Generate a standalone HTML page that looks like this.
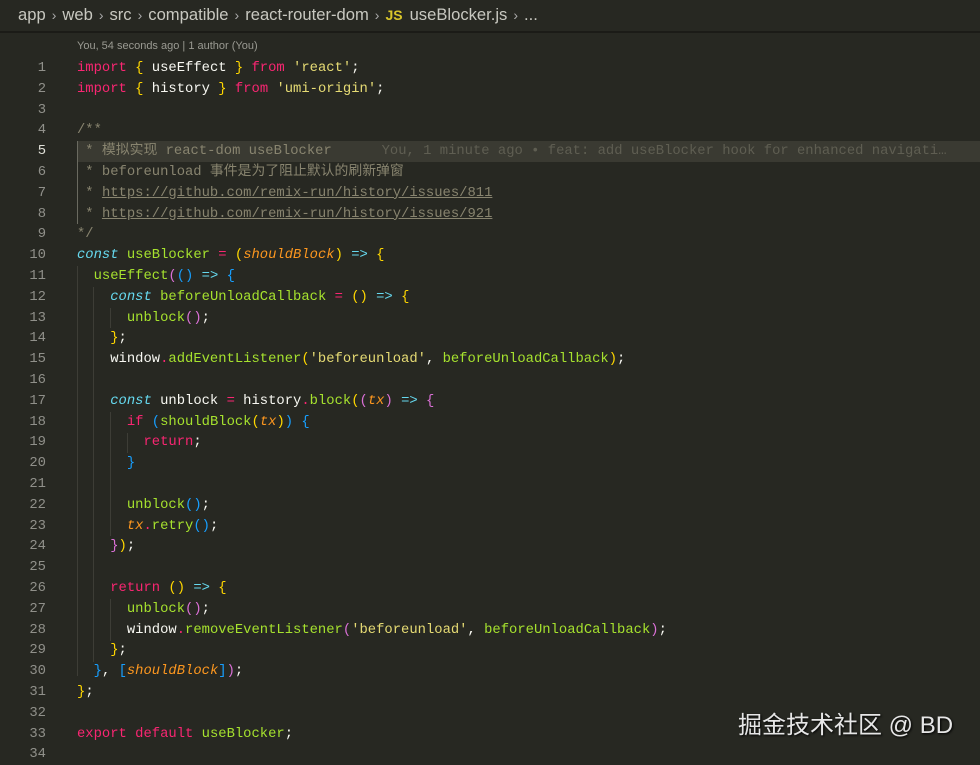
<!DOCTYPE html>
<html><head><meta charset="utf-8"><style>
body{margin:0;width:980px;height:758px;background:#272822;overflow:hidden;position:relative;font-family:"Liberation Mono","Noto Sans CJK SC",monospace;}
.bc{position:absolute;left:0;top:0;width:980px;height:33px;background:#272822;border-bottom:2px solid #1b1b17;font-family:"Liberation Sans",sans-serif;font-size:16.6px;color:#c8c8c0;line-height:30px;padding-left:18px;box-sizing:border-box;white-space:nowrap}
.bc .sep{color:#aaa;margin:0 6px;font-size:14px}
.bc .js{color:#d8c52a;font-weight:bold;font-size:14px;margin-right:7px}
.lens{position:absolute;left:77px;top:40px;font-family:"Liberation Sans",sans-serif;font-size:11px;color:#9a9a92}
.ln{position:absolute;left:0;width:46px;text-align:right;font-size:13.85px;color:#90908a;height:20.8px;line-height:20.8px}
.l{position:absolute;left:77px;font-size:13.85px;height:20.8px;line-height:20.8px;white-space:pre;color:#f8f8f2}
.k{color:#f92672}.s{color:#e6db74}.f{color:#a6e22e}.c{color:#66d9ef;font-style:italic}.p{color:#fd971f;font-style:italic}
.y{color:#ffd700}.m{color:#da70d6}.b{color:#179fff}.g{color:#88846f}.cy{color:#66d9ef}
.hl{position:absolute;left:77px;width:903px;height:20.8px;background:#3a3a32}
.u{text-decoration:underline;text-decoration-color:#88846f}
.ig{position:absolute;width:1px;background:#3d3d36}
.wm{position:absolute;left:738px;top:705px;font-family:"Liberation Sans","Noto Sans CJK SC",sans-serif;font-size:24px;color:#e6e6e6;text-shadow:1px 1px 2px #000;white-space:nowrap}
</style></head><body>
<div class="bc">app<span class="sep">›</span>web<span class="sep">›</span>src<span class="sep">›</span>compatible<span class="sep">›</span>react-router-dom<span class="sep">›</span><span class="js">JS</span>useBlocker.js<span class="sep">›</span>...</div>
<div class="lens">You, 54 seconds ago | 1 author (You)</div>
<div class="hl" style="top:141px"></div>
<div class="ig" style="left:77px;top:141px;height:83px;background:#6a6a60"></div>
<div class="ig" style="left:77px;top:266px;height:410px"></div>
<div class="ig" style="left:93px;top:287px;height:375px"></div>
<div class="ig" style="left:110px;top:308px;height:20px"></div>
<div class="ig" style="left:110px;top:412px;height:124px"></div>
<div class="ig" style="left:127px;top:433px;height:20px"></div>
<div class="ig" style="left:110px;top:599px;height:42px"></div>
<div id="code"></div>
<div class="wm">掘金技术社区 @ BD</div>
<script>
var L=[
'<span class="k">import</span> <span class="y">{</span> useEffect <span class="y">}</span> <span class="k">from</span> <span class="s">\'react\'</span>;',
'<span class="k">import</span> <span class="y">{</span> history <span class="y">}</span> <span class="k">from</span> <span class="s">\'umi-origin\'</span>;',
'',
'<span class="g">/**</span>',
'<span class="g"> * 模拟实现 react-dom useBlocker      </span><span style="color:#5f5e52">You, 1 minute ago • feat: add useBlocker hook for enhanced navigati…</span>',
'<span class="g"> * beforeunload 事件是为了阻止默认的刷新弹窗</span>',
'<span class="g"> * <span class="u">https://github.com/remix-run/history/issues/811</span></span>',
'<span class="g"> * <span class="u">https://github.com/remix-run/history/issues/921</span></span>',
'<span class="g">*/</span>',
'<span class="c">const</span> <span class="f">useBlocker</span> <span class="k">=</span> <span class="y">(</span><span class="p">shouldBlock</span><span class="y">)</span> <span class="cy">=&gt;</span> <span class="y">{</span>',
'  <span class="f">useEffect</span><span class="m">(</span><span class="b">()</span> <span class="cy">=&gt;</span> <span class="b">{</span>',
'    <span class="c">const</span> <span class="f">beforeUnloadCallback</span> <span class="k">=</span> <span class="y">()</span> <span class="cy">=&gt;</span> <span class="y">{</span>',
'      <span class="f">unblock</span><span class="m">()</span>;',
'    <span class="y">}</span>;',
'    window<span class="k">.</span><span class="f">addEventListener</span><span class="y">(</span><span class="s">\'beforeunload\'</span>, <span class="f">beforeUnloadCallback</span><span class="y">)</span>;',
'',
'    <span class="c">const</span> unblock <span class="k">=</span> history<span class="k">.</span><span class="f">block</span><span class="y">(</span><span class="m">(</span><span class="p">tx</span><span class="m">)</span> <span class="cy">=&gt;</span> <span class="m">{</span>',
'      <span class="k">if</span> <span class="b">(</span><span class="f">shouldBlock</span><span class="y">(</span><span class="p">tx</span><span class="y">)</span><span class="b">)</span> <span class="b">{</span>',
'        <span class="k">return</span>;',
'      <span class="b">}</span>',
'',
'      <span class="f">unblock</span><span class="b">()</span>;',
'      <span class="p">tx</span><span class="k">.</span><span class="f">retry</span><span class="b">()</span>;',
'    <span class="m">}</span><span class="y">)</span>;',
'',
'    <span class="k">return</span> <span class="y">()</span> <span class="cy">=&gt;</span> <span class="y">{</span>',
'      <span class="f">unblock</span><span class="m">()</span>;',
'      window<span class="k">.</span><span class="f">removeEventListener</span><span class="m">(</span><span class="s">\'beforeunload\'</span>, <span class="f">beforeUnloadCallback</span><span class="m">)</span>;',
'    <span class="y">}</span>;',
'  <span class="b">}</span>, <span class="b">[</span><span class="p">shouldBlock</span><span class="b">]</span><span class="m">)</span>;',
'<span class="y">}</span>;',
'',
'<span class="k">export</span> <span class="k">default</span> <span class="f">useBlocker</span>;',
''];
var h='';
for(var i=0;i<L.length;i++){var t=(58+20.8*i).toFixed(1);
h+='<div class="ln" style="top:'+t+'px'+(i==4?';color:#e0e0d8':'')+'">'+(i+1)+'</div><div class="l" style="top:'+t+'px">'+L[i]+'</div>';}
document.getElementById('code').innerHTML=h;
</script>
</body></html>
